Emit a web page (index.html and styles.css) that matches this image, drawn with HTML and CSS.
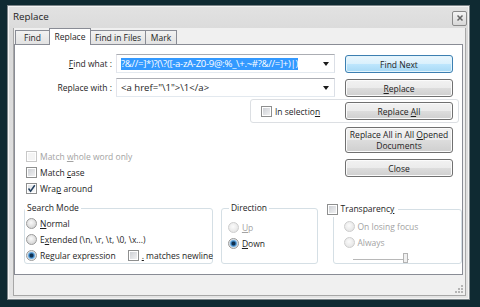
FILE: index.html
```html
<!DOCTYPE html>
<html lang="en">
<head>
    <meta charset="UTF-8">
    <title>Replace</title>
    <link rel="stylesheet" href="styles.css">
</head>
<body>
    <div class="window">
        <div class="titlebar">
            <span class="title">Replace</span>
            <span class="close-btn">
                <svg width="8" height="8" viewBox="0 0 8 8"><path d="M1.5 1.5 L6.5 6.5 M6.5 1.5 L1.5 6.5" stroke="#666" stroke-width="1.5"/></svg>
            </span>
        </div>
        <div class="client">
            <div class="tabs">
                <div class="tab tab-find">Find</div>
                <div class="tab tab-replace active">Replace</div>
                <div class="tab tab-files">Find in Files</div>
                <div class="tab tab-mark">Mark</div>
            </div>
            <div class="panel">
                <div class="row row-find">
                    <label class="field-label"><u>F</u>ind what :</label>
                    <div class="combo">
                        <div class="combo-text"><span class="sel">?&amp;//=]*)?(\?([-a-zA-Z0-9@:%_\+.~#?&amp;//=]+)|)</span></div>
                        <span class="arrow"></span>
                    </div>
                    <button class="btn btn-default">Find Next</button>
                </div>
                <div class="row row-replace">
                    <label class="field-label">Replace with :</label>
                    <div class="combo">
                        <div class="combo-text">&lt;a href="\1"&gt;\1&lt;/a&gt;</div>
                        <span class="arrow"></span>
                    </div>
                    <button class="btn"><u>R</u>eplace</button>
                </div>
                <div class="selection-box">
                    <div class="opt"><span class="check"></span><span>In selectio<u>n</u></span></div>
                    <button class="btn">Replace <u>A</u>ll</button>
                </div>
                <div class="row row-lower">
                    <div class="checks">
                        <div class="opt disabled"><span class="check"></span><span>Match <u>w</u>hole word only</span></div>
                        <div class="opt"><span class="check"></span><span>Match <u>c</u>ase</span></div>
                        <div class="opt"><span class="check checked"><svg width="9" height="9" viewBox="0 0 9 9"><path d="M1.5 4.5 L3.6 7.2 L7.8 1.2" fill="none" stroke="#23405f" stroke-width="1.5"/></svg></span><span>Wra<u>p</u> around</span></div>
                    </div>
                    <div class="side-buttons">
                        <button class="btn btn-tall">Replace All in All <u>O</u>pened<br>Documents</button>
                        <button class="btn btn-close">Close</button>
                    </div>
                </div>
                <div class="groups">
                    <fieldset class="group group-mode">
                        <legend>Search Mode</legend>
                        <div class="opt"><span class="radio"></span><span><u>N</u>ormal</span></div>
                        <div class="opt"><span class="radio"></span><span>E<u>x</u>tended (\n, \r, \t, \0, \x...)</span></div>
                        <div class="opt">
                            <span class="radio checked"></span><span>Re<u>g</u>ular expression</span>
                            <span class="check newline-check"></span><span><u>.</u> matches newline</span>
                        </div>
                    </fieldset>
                    <fieldset class="group group-dir">
                        <legend>Direction</legend>
                        <div class="opt disabled"><span class="radio"></span><span><u>U</u>p</span></div>
                        <div class="opt"><span class="radio checked"></span><span><u>D</u>own</span></div>
                    </fieldset>
                    <fieldset class="group group-trans">
                        <legend><span class="opt"><span class="check"></span><span>Transparenc<u>y</u></span></span></legend>
                        <div class="opt disabled"><span class="radio"></span><span>On losing focus</span></div>
                        <div class="opt disabled"><span class="radio"></span><span>Always</span></div>
                        <div class="slider"><span class="thumb"></span></div>
                    </fieldset>
                </div>
            </div>
            <div class="statusbar">
                <svg class="grip" width="10" height="10" viewBox="0 0 10 10">
                    <rect x="7" y="1" width="2" height="2" fill="#b5b5b5"/>
                    <rect x="4" y="4" width="2" height="2" fill="#b5b5b5"/>
                    <rect x="7" y="4" width="2" height="2" fill="#b5b5b5"/>
                    <rect x="1" y="7" width="2" height="2" fill="#b5b5b5"/>
                    <rect x="4" y="7" width="2" height="2" fill="#b5b5b5"/>
                    <rect x="7" y="7" width="2" height="2" fill="#b5b5b5"/>
                </svg>
            </div>
        </div>
    </div>
</body>
</html>
```

FILE: styles.css
```css
body {
    margin: 0;
    padding: 5px 0 0 7px;
    background: #0f2a32;
    font-family: 'Open Sans', sans-serif;
    font-size: 8.5px;
    color: #1e1e1e;
}
.window {
    box-sizing: border-box;
    width: 463px;
    height: 295px;
    border: 1px solid #7d8589;
    background: linear-gradient(to bottom, #e2e2e2, #d9d9d9 30px, #e4e4e4);
    box-shadow: inset 0 0 0 1px #f4f4f4;
    display: flex;
    flex-direction: column;
}
.titlebar {
    height: 22px;
    flex: none;
    display: flex;
    align-items: center;
    justify-content: space-between;
    padding: 0 2px 0 5px;
}
.title {
    font-size: 9.8px;
    color: #222;
    margin-top: -1px;
}
.close-btn {
    box-sizing: border-box;
    width: 15px;
    height: 15px;
    margin-top: 2px;
    border: 1px solid #8a8a8a;
    border-radius: 2px;
    background: linear-gradient(to bottom, #f4f4f4, #d8d8d8);
    display: flex;
    align-items: center;
    justify-content: center;
}
.client {
    flex: 1;
    margin: 0 3px 3px 5px;
    background: #f0f0f0;
    border: 1px solid #a7a7a7;
    border-top: none;
    display: flex;
    flex-direction: column;
}

/* tabs */
.tabs {
    display: flex;
    height: 16px;
    padding-left: 1px;
}
.tab {
    box-sizing: border-box;
    height: 15px;
    margin-top: 2px;
    border: 1px solid #898c95;
    border-bottom: none;
    border-right: none;
    background: linear-gradient(to bottom, #f2f2f2, #e1e1e1);
    text-align: center;
    line-height: 14px;
    white-space: nowrap;
}
.tab-find { width: 34px; }
.tab-replace { width: 42px; }
.tab-files { width: 54px; }
.tab-mark { width: 32px; border-right: 1px solid #898c95; }
.tab.active {
    height: 17px;
    margin-top: 0;
    margin-bottom: -1px;
    background: #fff;
    border-right: 1px solid #898c95;
    line-height: 15px;
    position: relative;
    z-index: 1;
}
.tab.active + .tab { border-left: none; }

.panel {
    box-sizing: border-box;
    height: 231px;
    margin-right: 2px;
    border: 1px solid #898c95;
    background: #fff;
    padding-top: 9px;
}

/* find / replace rows */
.row {
    display: flex;
    align-items: flex-end;
}
.row-replace { margin-top: 5px; }
.field-label {
    width: 97px;
    margin-right: 4px;
    text-align: right;
    line-height: 19px;
    white-space: nowrap;
}
.combo {
    box-sizing: border-box;
    width: 219px;
    height: 19px;
    margin-right: 10px;
    border: 1px solid #abadb3;
    border-color: #abadb3 #dbdfe6 #e3e9ef #e2e3ea;
    display: flex;
    align-items: center;
    padding-left: 4px;
}
.combo-text {
    width: 198px;
    overflow: hidden;
    white-space: nowrap;
    display: flex;
    font-size: 9.6px;
}
.sel {
    background: #3399ff;
    color: #fff;
    line-height: 12px;
    letter-spacing: -0.3px;
}
.arrow {
    margin-left: auto;
    margin-right: 5px;
    width: 0;
    height: 0;
    border-left: 3px solid transparent;
    border-right: 3px solid transparent;
    border-top: 4px solid #1a1a1a;
}

/* buttons */
.btn {
    box-sizing: border-box;
    width: 108px;
    height: 18px;
    padding: 0;
    border: 1px solid #707070;
    border-radius: 3px;
    background: linear-gradient(to bottom, #f2f2f2 0%, #ebebeb 50%, #dddddd 50%, #cfcfcf 100%);
    box-shadow: inset 0 0 0 1px #fbfbfb;
    font-family: inherit;
    font-size: 8.5px;
    color: #1e1e1e;
    line-height: 11px;
}
.btn-default {
    border-color: #3c7fb1;
    background: linear-gradient(to bottom, #eaf6fd 0%, #d9f0fc 50%, #bee6fd 50%, #a7d9f5 100%);
    box-shadow: inset 0 0 0 1px #e3f4fc;
}
.btn-tall { height: 26px; }
.btn-close { margin-top: 6px; }

/* in selection */
.selection-box {
    box-sizing: border-box;
    width: 209px;
    height: 24px;
    margin: 2px 0 0 235px;
    border: 1px solid #dcdfe3;
    border-radius: 3px;
    display: flex;
    align-items: center;
    padding: 0 5px 0 10px;
    justify-content: space-between;
}

/* options */
.opt {
    display: flex;
    align-items: center;
    height: 16px;
    white-space: nowrap;
}
.disabled { color: #a3a3a3; }
.check {
    box-sizing: border-box;
    width: 11px;
    height: 11px;
    margin-right: 3px;
    flex: none;
    border: 1px solid #8e8f8f;
    background: linear-gradient(135deg, #c9ccd1, #f5f5f6);
    box-shadow: inset 0 0 0 1px #fff;
    display: flex;
    align-items: center;
    justify-content: center;
}
.disabled .check {
    border-color: #c8c8c8;
    background: #f4f4f4;
}
.check.checked {
    background: linear-gradient(135deg, #dfe2e6, #fafafa);
}
.radio {
    box-sizing: border-box;
    width: 11px;
    height: 11px;
    margin-right: 3px;
    flex: none;
    border: 1px solid #9a9a9a;
    border-radius: 50%;
    background: radial-gradient(circle at 45% 40%, #fafafa, #d3d3d3 80%);
}
.radio.checked {
    background: radial-gradient(circle, #10304f 0, #10304f 1.4px, #3a82c0 2.4px, #9fcbee 3.6px, #e6e6e6 4.2px, #d0d0d0 100%);
}
.disabled .radio {
    border-color: #cdcdcd;
    background: radial-gradient(circle at 45% 40%, #fbfbfb, #e4e4e4 80%);
}

/* lower area */
.row-lower {
    margin-top: 4px;
    align-items: flex-start;
}
.checks {
    padding: 21px 0 0 11px;
}
.side-buttons {
    margin-left: auto;
    margin-right: 9px;
    display: flex;
    flex-direction: column;
}

/* group boxes */
.groups {
    display: flex;
    margin: 5px 0 0 9px;
}
.group {
    margin: 0;
    padding: 0;
    border: 1px solid #d5dfe5;
    border-radius: 3px;
    min-width: 0;
}
legend {
    padding: 0 2px;
    line-height: 14px;
}
.group-mode {
    width: 194px;
}
.group-mode .opt { padding-left: 1px; }
.newline-check { margin-left: 12px; }
.group-dir {
    width: 92px;
    margin-left: 8px;
    padding: 4px 0 0 6px;
}
.group-dir legend { margin-left: 1px; }
.group-trans {
    width: 122px;
    margin-left: 15px;
    padding: 1px 0 0 10px;
}
.group-trans legend {
    margin-left: -17px;
    padding: 0 4px 0 0;
    background: #fff;
}
.slider {
    position: relative;
    width: 56px;
    height: 8px;
    margin: 2px 0 0 9px;
    border-bottom: 1px solid #b8b8b8;
    box-sizing: border-box;
}
.thumb {
    position: absolute;
    right: 1px;
    top: 1px;
    width: 3px;
    height: 8px;
    border: 1px solid #b3b3b3;
    background: #f0f0f0;
}

.statusbar {
    flex: 1;
    display: flex;
    justify-content: flex-end;
    align-items: flex-end;
}
.grip { margin: 0 1px 1px 0; }
```
